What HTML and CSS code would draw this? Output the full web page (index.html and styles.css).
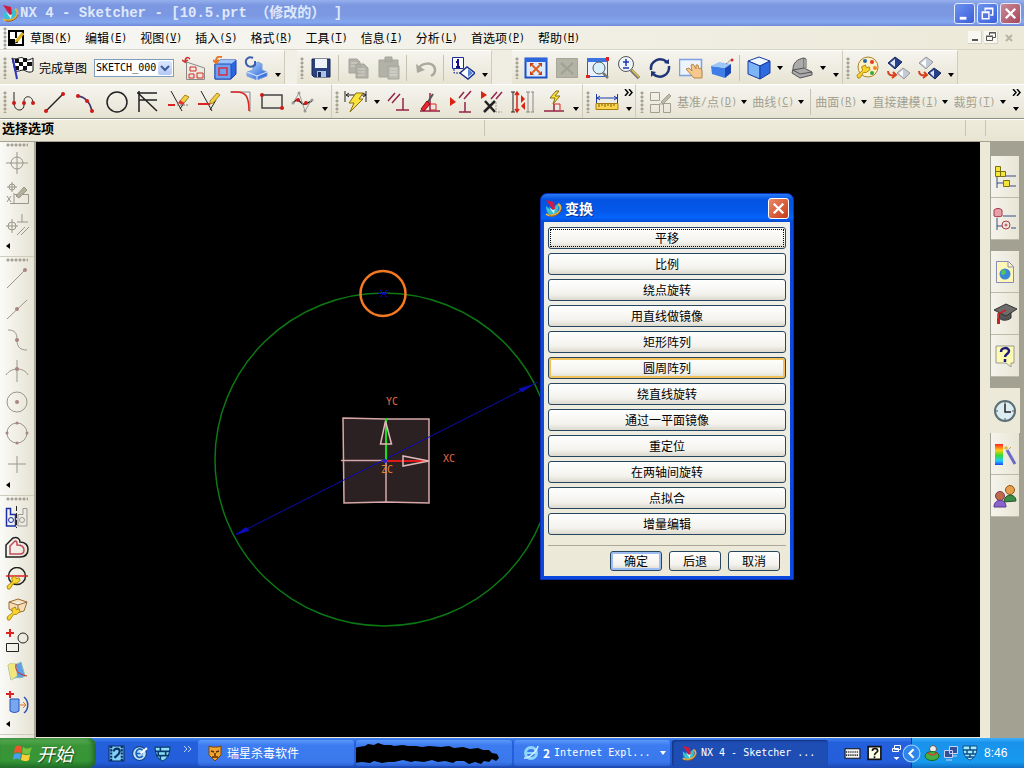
FILE: index.html
```html
<!DOCTYPE html>
<html lang="zh-CN">
<head>
<meta charset="utf-8">
<title>NX 4 - Sketcher</title>
<link rel="stylesheet" href="styles.css">
</head>
<body>
<svg class="defs" aria-hidden="true">
  <defs>
    <linearGradient id="gBlue" x1="0" y1="0" x2="1" y2="1"><stop offset="0" stop-color="#b9dcff"/><stop offset="1" stop-color="#1c55d8"/></linearGradient>
    <linearGradient id="gRainbow" x1="0" y1="0" x2="0" y2="1"><stop offset="0" stop-color="#f22"/><stop offset=".3" stop-color="#fc1"/><stop offset=".55" stop-color="#3d3"/><stop offset=".8" stop-color="#2cf"/><stop offset="1" stop-color="#24e"/></linearGradient>
  </defs>
  <symbol id="nx" viewBox="0 0 18 18"><path d="M2 7c2 2 5 4 7 4 1-2 2-5 5-6 2 5-1 11-6 11-4 0-6-4-6-9z" fill="#35c3d2" stroke="none"/><path d="M5 8l4 3 2-3-1 7z" fill="#d9f6f8" stroke="none"/><path d="M2 1l8 2 1 7-2 1z" fill="#d31a3c" stroke="none"/><path d="M2 15c4 3 12 1 14-4 1-3 0-5-2-6" stroke="#e8b03a" stroke-width="2"/><path d="M5 17c5 1 10-1 12-6" stroke="#9a5a1e"/></symbol>
  <symbol id="down" viewBox="0 0 6 4"><path d="M0 0h6L3 4z" fill="#000" stroke="none"/></symbol>
  <symbol id="left" viewBox="0 0 4 6"><path d="M4 0v6L0 3z" fill="#000" stroke="none"/></symbol>
  <symbol id="more" viewBox="0 0 9 7"><path d="M1 0l3 3.500-3 3.500M5 0l3 3.500-3 3.500" stroke="#000" stroke-width="1.500"/></symbol>
  <symbol id="wrench" viewBox="0 0 16 16"><path d="M2 15l-1-3 6-5-1-4 4-2 1 3 3-1 1 3-4 3-3 0-4 6z" fill="#f6d52c" stroke="#b18114"/></symbol>
</svg>

<header class="titlebar">
  <svg class="logo"><use href="#nx"/></svg>
  <h1>NX 4 - Sketcher - [10.5.prt （修改的） ]</h1>
  <div class="winbtns">
    <button aria-label="最小化"><svg viewBox="0 0 20 20"><path d="M5 15h7" stroke="#fff" stroke-width="3"/></svg></button>
    <button aria-label="还原"><svg viewBox="0 0 20 20" stroke="#fff"><path d="M7.500 7V4.500h8v7H13M7 5h9" stroke-width="1.500"/><path d="M4.500 8.500h7v7h-7zM4 9h8" stroke-width="1.500"/></svg></button>
    <button class="close" aria-label="关闭"><svg viewBox="0 0 20 20"><path d="M5 5l10 10M15 5L5 15" stroke="#fff" stroke-width="2.500"/></svg></button>
  </div>
</header>

<nav class="menubar">
  <i class="grip"></i>
  <svg class="doc" viewBox="0 0 16 16"><path d="M1 1h14v14H1z" fill="#fff" stroke="#000" stroke-width="2"/><path d="M1 9h6v6H1zM7 2h2v6H7z" fill="#000" stroke="none"/><path d="M8 12l7-9" stroke="#d9b21e" stroke-width="3"/><path d="M7 13l3-1" stroke="#000"/></svg>
  <button>草图<span>(<u>K</u>)</span></button>
  <button>编辑<span>(<u>E</u>)</span></button>
  <button>视图<span>(<u>V</u>)</span></button>
  <button>插入<span>(<u>S</u>)</span></button>
  <button>格式<span>(<u>R</u>)</span></button>
  <button>工具<span>(<u>T</u>)</span></button>
  <button>信息<span>(<u>I</u>)</span></button>
  <button>分析<span>(<u>L</u>)</span></button>
  <button>首选项<span>(<u>P</u>)</span></button>
  <button>帮助<span>(<u>H</u>)</span></button>
  <div class="mdi">
    <button aria-label="最小化窗口"><svg viewBox="0 0 14 14"><path d="M4 10h6" stroke="#555" stroke-width="2"/></svg></button>
    <button aria-label="还原窗口"><svg viewBox="0 0 14 14" stroke="#555"><path d="M5.500 5V2.500h6v5H9M5 3h7M2.500 6.500h6v4h-6zM2 6h7" /></svg></button>
    <button class="off" aria-label="关闭窗口" disabled><svg viewBox="0 0 14 14"><path d="M4 4l6 6M10 4l-6 6" stroke="#b8b5a6" stroke-width="2"/></svg></button>
  </div>
</nav>

<div class="toolrow">
  <div class="toolbar">
    <i class="grip"></i>
    <button class="finish"><svg viewBox="0 0 24 24"><path d="M1 2c4 3 8-2 11 0s5 3 10 0v13c-4 3-8-1-10-1s-5 2-8 1z" fill="#fff" stroke="#111"/><path d="M4 3h4v4H4zM12 2h4v4h-4zM8 6h4v4H8zM16 6h5v4h-5zM4 10h4v4H4zM12 10h4v4h-4z" fill="#111" stroke="none"/><path d="M2 3l4 20" stroke="#2c36c0" stroke-width="2"/></svg>完成草图</button>
    <label class="combo"><select aria-label="草图名称"><option>SKETCH_000</option></select><span><svg viewBox="0 0 14 14"><path d="M3 5l4 4 4-4" stroke="#3c5a96" stroke-width="2"/></svg></span></label>
    <button class="tool" aria-label="定向视图"><svg viewBox="0 0 24 24"><path d="M4.500 23.500V6l18 6v11.500zM4 3v4" stroke="#888"/><path d="M8 11h6v4H8zM7 18h5v4H7zM15 17h6v5h-6z" stroke="#d62a2a"/><path d="M8 3C5 0 3 2 3 6l-3-2M3 6l3-2" stroke="#d62a2a" stroke-width="1.500"/></svg></button>
    <button class="tool" aria-label="定向到模型"><svg viewBox="0 0 24 24"><path d="M2 8l5-4h16v14l-5 5H2z" fill="#2c66e0" stroke="#1b3fae"/><path d="M2 8l5-4h16l-5 4z" fill="#9cc5f7" stroke="none"/><path d="M2 8h16v15H2z" fill="#6ca2f0" stroke="#234bb8"/><path d="M6 12h8v7H6z" stroke="#e02a3a" stroke-width="1.500"/><path d="M9 1C5 0 3 1 3 6M0 4l3 3 3-3" stroke="#e8752a" stroke-width="2"/></svg></button>
    <button class="tool" aria-label="重新附着"><svg viewBox="0 0 24 24"><path d="M3 16l6-2V9l5-3 4 2v6l5 2v4l-10 4-10-4z" fill="url(#gBlue)" stroke="#7b9fdc"/><path d="M3 16l10 4 10-4M13 20v4" stroke="#dcebff"/><path d="M9 2C5 0 1 3 2 7s6 5 9 2V5" stroke="#3d5fb0" stroke-width="2"/></svg></button>
    <button class="drop low" aria-label="更多"><svg><use href="#down"/></svg></button>
  </div>
  <div class="toolbar gap-s">
    <i class="grip"></i>
    <button class="tool" aria-label="保存"><svg viewBox="0 0 24 24"><path d="M3 3h18v18H5l-2-2z" fill="#29417e" stroke="#1a2750"/><path d="M6 3h12v9H6z" fill="#eef2fa" stroke="none"/><path d="M8 15h9v6H8z" fill="#a9c4e8" stroke="none"/><path d="M9 16h3v5H9z" fill="#1a2750" stroke="none"/></svg></button>
    <i class="sep"></i>
    <button class="tool" aria-label="复制" disabled><svg viewBox="0 0 24 24" fill="#b2b2a8" stroke="#a4a49a"><path d="M3 3h8l3 3v11H3zM10 8h8l4 4v10H10z"/><path d="M5 7h6M5 10h4M12 13h7M12 16h7M12 19h7" stroke="#d9d8cd"/></svg></button>
    <button class="tool" aria-label="粘贴" disabled><svg viewBox="0 0 24 24" fill="#b2b2a8" stroke="#a4a49a"><path d="M2 4h19v17H2zM8 1h7v5H8z"/><path d="M11 10h11v13H11z" fill="#bdbdb4"/><path d="M13 13h7M13 16h7M13 19h7" stroke="#dddcd2"/></svg></button>
    <i class="sep"></i>
    <button class="tool" aria-label="撤消" disabled><svg viewBox="0 0 24 24"><path d="M4 14c2-8 17-9 17 0 0 3-2 5-4 6" stroke="#aaa99e" stroke-width="2.500"/><path d="M2 8l1 9 8-3z" fill="#aaa99e" stroke="none"/></svg></button>
    <i class="sep"></i>
    <button class="tool" aria-label="对象信息"><svg viewBox="0 0 24 24"><path d="M1.500 1.500h11v11h-11z" fill="#fff" stroke="#1b2a9a"/><path d="M7 3v2M5 6h2v5M5 11h4" stroke="#10108a" stroke-width="2"/><path d="M3 13v4h6" stroke="#1b2a9a" stroke-dasharray="2 1"/><path d="M9 17l7-6 8 6-7 6z" fill="#fff" stroke="#18308a" stroke-width="1.500"/><path d="M17 13v8l5-4z" fill="#5684d8" stroke="none"/></svg></button>
    <button class="drop low" aria-label="更多"><svg><use href="#down"/></svg></button>
  </div>
  <div class="toolbar gap-l">
    <i class="grip"></i>
    <button class="tool" aria-label="适合窗口"><svg viewBox="0 0 24 24"><path d="M1.500 2.500h21v19h-21z" fill="#dcebfd" stroke="#1b50c8" stroke-width="2"/><path d="M1 2h22v4H1z" fill="#2b66dc" stroke="none"/><path d="M8 9l8 8M16 9l-8 8" stroke="#e0621c" stroke-width="2"/><path d="M6 7h4l-4 4zM18 7v4l-4-4zM6 19v-4l4 4zM18 19h-4l4-4z" fill="#c23a10" stroke="none"/></svg></button>
    <button class="tool" aria-label="适合选择" disabled><svg viewBox="0 0 24 24"><path d="M1.500 2.500h21v19h-21z" fill="#b3b3a6" stroke="#a6a69a"/><path d="M6 7l12 11M18 7L6 18" stroke="#a0a094" stroke-width="2"/></svg></button>
    <button class="tool" aria-label="缩放窗口"><svg viewBox="0 0 24 24"><path d="M1.500 3.500h20v17h-20z" fill="#e8f1fd" stroke="#2a5cd0"/><path d="M1 2h21v4H1z" fill="#3a74e0" stroke="none"/><circle cx="13" cy="12" r="6" fill="#d8f0fa" stroke="#555"/><path d="M17 17l5 5" stroke="#777" stroke-width="2.500"/><path d="M0 19h4v3H0zM20 1h3v4h-3z" fill="#d22" stroke="none"/></svg></button>
    <button class="tool" aria-label="缩放"><svg viewBox="0 0 24 24"><circle cx="9" cy="8" r="7.500" fill="#eef6fb" stroke="#555"/><path d="M9 3v7M6 6h6M6 12h6" stroke="#2038b0" stroke-width="1.500"/><path d="M14 14l8 8" stroke="#777" stroke-width="3.500"/><path d="M15 14l7 7" stroke="#e3c64a" stroke-width="1.500"/></svg></button>
    <button class="tool" aria-label="旋转"><svg viewBox="0 0 24 24" stroke="#1f3578" stroke-width="2.500"><path d="M3 14C2 5 12 0 19 6M21 10c1 9-9 14-16 8"/><path d="M16 7l5 1V3zM8 16l-5-1v6z" fill="#1f3578" stroke="none"/></svg></button>
    <button class="tool" aria-label="平移"><svg viewBox="0 0 24 24"><path d="M.500 3.500h22v16h-22z" fill="#eef4fd" stroke="#7ba0e4" stroke-width="1.500"/><path d="M7 13l3-1 3 3-1-6 2-1 3 5v-4l2 0 1 4 2-1 1 3v7h-8z" fill="#f6c88d" stroke="#b98745"/></svg></button>
    <button class="tool" aria-label="透视"><svg viewBox="0 0 24 24"><path d="M1 10l14 2v10L2 18z" fill="#3e7ee6" stroke="none"/><path d="M1 10l8-4 12 2-6 4z" fill="#9cc8f8" stroke="none"/><path d="M15 12l6-4v9l-6 5z" fill="#1b48b4" stroke="none"/><path d="M16 8l6-5" stroke="#777" stroke-dasharray="2 1"/><circle cx="22" cy="4" r="1.500" fill="#d22" stroke="none"/></svg></button>
    <i class="sep"></i>
    <button class="tool" aria-label="着色"><svg viewBox="0 0 24 24" stroke="#1b3aa0"><path d="M1 5l11-4 11 4-10 5z" fill="#eef6ff"/><path d="M1 5l12 5v13L1 18z" fill="#7db4f6"/><path d="M13 10l10-5v12l-10 6z" fill="#2e6be0"/></svg></button>
    <button class="drop" aria-label="着色选项"><svg><use href="#down"/></svg></button>
    <button class="tool" aria-label="定向"><svg viewBox="0 0 24 24" stroke="#555"><path d="M3 13C3 7 7 3 14 2v10l8 4v3l-12 3-8-5z" fill="#aaa"/><path d="M3 14l11-2M10 18l12-2M10 18l-7-4M14 2l2 1v9" /></svg></button>
    <button class="drop" aria-label="定向选项"><svg><use href="#down"/></svg></button>
    <button class="drop low" aria-label="更多"><svg><use href="#down"/></svg></button>
  </div>
  <div class="toolbar">
    <i class="grip"></i>
    <button class="tool" aria-label="编辑对象显示"><svg viewBox="0 0 24 24"><ellipse cx="13" cy="11" rx="10" ry="10" fill="#fbf0c8" stroke="#a9832e"/><circle cx="10" cy="5" r="2" fill="#26a" stroke="none"/><circle cx="17" cy="6" r="2" fill="#e33" stroke="none"/><circle cx="20" cy="12" r="2" fill="#e82" stroke="none"/><circle cx="17" cy="17" r="2" fill="#3a3" stroke="none"/><use href="#wrench" x="1" y="8" width="15" height="15"/></svg></button>
    <button class="tool" aria-label="隐藏"><svg viewBox="0 0 24 24"><path d="M2 7l7-6 7 5-7 7z" fill="#274189" stroke="#1b2a60"/><path d="M9 3v8l-5-4z" fill="#dfe8f8" stroke="none"/><path d="M11 17l6-5 7 5-6 6z" fill="#c4cbd8" stroke="#999"/><path d="M17 14v7l-4-4z" fill="#fff" stroke="none"/><path d="M2 15c0 4 3 5 7 4M7 16l3 3-4 3" stroke="#d8431e" stroke-width="2"/></svg></button>
    <button class="tool" aria-label="显示"><svg viewBox="0 0 24 24"><path d="M2 7l7-6 7 5-7 7z" fill="#c4cbd8" stroke="#999"/><path d="M9 3v8l-5-4z" fill="#fff" stroke="none"/><path d="M11 17l6-5 7 5-6 6z" fill="#274189" stroke="#1b2a60"/><path d="M17 14v7l-4-4z" fill="#dfe8f8" stroke="none"/><path d="M2 15c0 4 3 5 7 4M7 16l3 3-4 3" stroke="#d8431e" stroke-width="2"/></svg></button>
    <button class="drop low" aria-label="更多"><svg><use href="#down"/></svg></button>
  </div>
</div>

<div class="toolrow second">
  <div class="toolbar">
    <i class="grip"></i>
    <button class="tool" aria-label="轮廓"><svg viewBox="0 0 24 24"><path d="M2 2v11c0 9 10 9 10 2V11c0-6 9-6 9 2" /><g class="dots"><circle cx="2" cy="13" r="2"/><circle cx="12" cy="13" r="2"/><circle cx="21" cy="13" r="2"/></g></svg></button>
    <button class="tool" aria-label="直线"><svg viewBox="0 0 24 24"><path d="M3 21L20 4" stroke-width="1.500"/><g class="dots"><circle cx="3" cy="21" r="2"/><circle cx="20" cy="4" r="2"/></g></svg></button>
    <button class="tool" aria-label="圆弧"><svg viewBox="0 0 24 24"><path d="M4 6c7 1 12 6 14 15" stroke="#436" stroke-width="1.500"/><g class="dots"><circle cx="4" cy="6" r="2"/><circle cx="13" cy="11" r="2"/><circle cx="18" cy="21" r="2"/></g></svg></button>
    <button class="tool" aria-label="圆"><svg viewBox="0 0 24 24"><circle cx="12" cy="12" r="10" stroke-width="1.500"/></svg></button>
    <button class="tool" aria-label="派生直线"><svg viewBox="0 0 24 24"><path d="M3 1v21M1 3h20M3 10h18M2 3l19 18" stroke-width="1.500"/></svg></button>
    <button class="tool" aria-label="快速修剪"><svg viewBox="0 0 24 24"><path d="M4 1l11 20M19 10l-6 9"/><path d="M1 15h7" stroke="#d22" stroke-width="2"/><path d="M10 15h12" stroke-dasharray="2 1" stroke="#777"/><path d="M13 11l5-6 4 2-5 6z" fill="#f1cf49" stroke="#a98319"/><path d="M13 10l4 3-2 2-4-2z" fill="#e33" stroke="none"/></svg></button>
    <button class="tool" aria-label="快速延伸"><svg viewBox="0 0 24 24"><path d="M3 1l11 20M18 10l-6 10"/><path d="M0 14h12" stroke="#d22" stroke-width="2"/><path d="M12 11l7-8 3 2-7 8-3 1z" fill="#f1cf49" stroke="#a98319"/></svg></button>
    <button class="tool" aria-label="圆角"><svg viewBox="0 0 24 24"><path d="M1 2h20v20" stroke="#888"/><path d="M2 2h6c9 0 12 5 12 19" stroke="#d22" stroke-width="1.500"/></svg></button>
    <button class="tool" aria-label="矩形"><svg viewBox="0 0 24 24"><path d="M2 5h20v13H2z" stroke="#444" stroke-width="1.500"/><g class="dots"><circle cx="2" cy="5" r="2"/><circle cx="22" cy="18" r="2"/></g></svg></button>
    <button class="tool" aria-label="样条"><svg viewBox="0 0 24 24"><path d="M2 13c5-7 7 0 10 1s5-2 9-3" stroke-width="1.500"/><path d="M2 13L8 3l6 18 7-12" stroke="#999"/><g class="dots"><circle cx="7" cy="10" r="2"/><circle cx="15" cy="13" r="2"/></g><g fill="#999" stroke="none"><circle cx="2" cy="13" r="1.500"/><circle cx="8" cy="3" r="1.500"/><circle cx="14" cy="21" r="1.500"/><circle cx="21" cy="10" r="1.500"/></g></svg></button>
    <button class="drop low" aria-label="更多"><svg><use href="#down"/></svg></button>
  </div>
  <div class="toolbar">
    <i class="grip"></i>
    <button class="tool" aria-label="自动判断的尺寸"><svg viewBox="0 0 24 24"><path d="M1 1v11M22 1v11M2 5h20M5 3L2 5l3 2M19 3l3 2-3 2"/><path d="M12 3h7l-4 6h4L6 22l4-9H5z" fill="#fbe23c" stroke="#8a6f10"/></svg></button>
    <button class="drop" aria-label="尺寸选项"><svg><use href="#down"/></svg></button>
    <button class="tool" aria-label="约束"><svg viewBox="0 0 24 24" stroke="#93254a" stroke-width="1.500"><path d="M1 11l7-8M5 13l8-9M16 8v12M9 20h13"/></svg></button>
    <button class="tool" aria-label="自动约束"><svg viewBox="0 0 24 24"><path d="M12 3v18M2 21h20" stroke="#93254a" stroke-width="1.500"/><path d="M12 14h6v6h-6" stroke="#d22"/><path d="M10 12l5-8" stroke="#555" stroke-width="2"/><path d="M3 19l6-8 3 3-6 7z" fill="#e23" stroke="#811"/></svg></button>
    <button class="tool" aria-label="显示约束"><svg viewBox="0 0 24 24" stroke="#93254a" stroke-width="1.500"><path d="M10 8l5-6M15 9l7-8M16 12v10M10 22h12"/><path d="M1 7l6 5-6 4z" fill="#d21" stroke="none"/></svg></button>
    <button class="tool" aria-label="不显示约束"><svg viewBox="0 0 24 24"><path d="M11 9l6-7M16 9l6-7" stroke="#93254a" stroke-width="1.500"/><path d="M1 1l6 4-6 4z" fill="#d21" stroke="none"/><path d="M5 11l10 11M15 11L4 22" stroke-width="2.500"/><path d="M16 12v10h6" stroke="#999" stroke-dasharray="2 1"/></svg></button>
    <button class="tool" aria-label="转换参考"><svg viewBox="0 0 24 24"><path d="M2 2v20M0 2h4M0 22h4" stroke="#222"/><path d="M6 2v20M4 5l2-3 2 3M4 19l2 3 2-3" stroke="#d21" stroke-width="1.500"/><path d="M10 5l4 4-4 4zM14 12l-4 4 4 4z" fill="#d21" stroke="none"/><path d="M17 2v20M22 2v20M15 2h4M15 22h4M20 2h3M20 22h3" stroke="#888"/></svg></button>
    <button class="tool" aria-label="备选解"><svg viewBox="0 0 24 24"><path d="M12 14v7M2 21h20" stroke="#93254a" stroke-width="1.500"/><path d="M12 14h6v6" stroke="#d22"/><path d="M14 1l-6 7h5l-2 6 7-8h-5l4-5z" fill="#fbe23c" stroke="#8a6f10"/></svg></button>
    <button class="drop low" aria-label="更多"><svg><use href="#down"/></svg></button>
  </div>
  <div class="toolbar">
    <i class="grip"></i>
    <button class="tool" aria-label="测量距离"><svg viewBox="0 0 24 24"><path d="M1.500 4v9M22.500 4v9M2 8h20M5 6L2 8l3 2M19 6l3 2-3 2" stroke="#1b3aa8"/><path d="M1 13.500h22v6H1z" fill="#fbd64c" stroke="#a87a14"/><path d="M4 14v3M7 14v2M10 14v3M13 14v2M16 14v3M19 14v2" stroke="#7a5a0e"/></svg></button>
    <button class="overflow" aria-label="更多"><svg class="more"><use href="#more"/></svg><svg><use href="#down"/></svg></button>
  </div>
  <div class="toolbar grow">
    <i class="grip"></i>
    <button class="tool" aria-label="草图特征" disabled><svg viewBox="0 0 24 24" stroke="#a09f90"><path d="M1.500 2.500h9v8h-9zM1.500 14.500h9v8h-9zM14.500 13.500h7v9h-7zM10 14h4"/><path d="M12 12l8-8 2 2-8 8z" fill="#bdbba8"/></svg></button>
    <button class="text" disabled>基准<span>/</span>点<span>(<u>D</u>)</span></button><button class="drop" aria-label="基准选项"><svg><use href="#down"/></svg></button>
    <button class="text" disabled>曲线<span>(<u>C</u>)</span></button><button class="drop" aria-label="曲线选项"><svg><use href="#down"/></svg></button>
    <i class="sep"></i>
    <button class="text" disabled>曲面<span>(<u>R</u>)</span></button><button class="drop" aria-label="曲面选项"><svg><use href="#down"/></svg></button>
    <button class="text" disabled>直接建模<span>(<u>I</u>)</span></button><button class="drop" aria-label="直接建模选项"><svg><use href="#down"/></svg></button>
    <button class="text" disabled>裁剪<span>(<u>T</u>)</span></button><button class="drop" aria-label="裁剪选项"><svg><use href="#down"/></svg></button>
    <button class="overflow end" aria-label="更多"><svg class="more"><use href="#more"/></svg><svg><use href="#down"/></svg></button>
  </div>
</div>

<div class="prompt"><strong>选择选项</strong><span></span><i></i><i></i></div>

<main class="work">
  <aside class="palette">
    <div class="group muted">
      <i class="hgrip"></i>
      <button aria-label="点捕捉"><svg viewBox="0 0 24 24"><circle cx="12" cy="12" r="6"/><path d="M12 1v22M1 12h22"/></svg></button>
      <button aria-label="编辑捕捉"><svg viewBox="0 0 24 24"><circle cx="7" cy="5" r="3"/><path d="M7 0v10M2 5h10M2 14l4 6M6 14l-4 6M9 11v11M9.500 12.500h14v9H5"/><path d="M11 14l8-9 3 3-8 8z" fill="#b3b19c"/></svg></button>
      <button aria-label="捕捉约束"><svg viewBox="0 0 24 24"><circle cx="7" cy="13" r="4"/><path d="M7 6v14M1 13h12M17 1v8M12 9h11M12 22l8-8M16 22l8-8"/></svg></button>
      <button class="side" aria-label="更多"><svg><use href="#left"/></svg></button>
    </div>
    <div class="group muted">
      <i class="hgrip"></i>
      <button aria-label="端点"><svg viewBox="0 0 24 24"><path d="M2 22L20 4"/><circle class="rose" cx="20" cy="4" r="2"/></svg></button>
      <button aria-label="中点"><svg viewBox="0 0 24 24"><path d="M2 22L22 3"/><circle class="rose" cx="12" cy="12" r="2"/></svg></button>
      <button aria-label="控制点"><svg viewBox="0 0 24 24"><path d="M3 2c7 0 9 3 9 10s3 10 10 10"/><circle class="rose" cx="12" cy="12" r="2"/></svg></button>
      <button aria-label="交点"><svg viewBox="0 0 24 24"><path d="M12 1v22M1 16C6 8 19 8 23 16"/><circle class="rose" cx="12" cy="10" r="2"/></svg></button>
      <button aria-label="圆心"><svg viewBox="0 0 24 24"><circle cx="12" cy="12" r="10"/><circle class="rose" cx="12" cy="12" r="2"/></svg></button>
      <button aria-label="象限点"><svg viewBox="0 0 24 24"><circle cx="12" cy="12" r="10"/><g class="rose"><circle cx="12" cy="2" r="1.500"/><circle cx="2" cy="12" r="1.500"/><circle cx="22" cy="12" r="1.500"/><circle cx="12" cy="22" r="1.500"/></g></svg></button>
      <button aria-label="现有点"><svg viewBox="0 0 24 24"><path d="M12 4v17M3 12h18"/></svg></button>
      <button class="side" aria-label="更多"><svg><use href="#left"/></svg></button>
    </div>
    <div class="group">
      <i class="hgrip"></i>
      <button aria-label="镜像"><svg viewBox="0 0 24 24"><path d="M1.500 3.500h4v6h5V21h-9z" stroke="#1c2fa8" stroke-width="1.500"/><circle cx="6" cy="15" r="2.500" stroke="#1c2fa8"/><path d="M22 3.500h-4v6h-5V21h9z" stroke="#999"/><circle cx="17" cy="15" r="2.500" stroke="#999"/><path d="M11.500 1v22" stroke-dasharray="5 2"/></svg></button>
      <button aria-label="偏置曲线"><svg viewBox="0 0 24 24"><path d="M1 21V9L8 2c5-2 7 2 7 4 6 0 8 4 8 7 0 5-3 8-8 8z" stroke-width="1.500"/><path d="M5 18v-8l5-5c2 0 2 1 2 4 5 0 7 2 7 5 0 2-1 4-4 4z" stroke="#c34a5a" stroke-width="1.500"/></svg></button>
      <button aria-label="编辑曲线"><svg viewBox="0 0 24 24"><circle cx="12" cy="9" r="8.500" stroke-width="1.500"/><path d="M1 9h22" stroke="#d22" stroke-width="1.500"/><use href="#wrench" x="1" y="8" width="15" height="15"/></svg></button>
      <button aria-label="编辑定义"><svg viewBox="0 0 24 24"><path d="M4 4l9-3 9 3-3 9-8 2-7-4zM4 4l9 3 9-3M13 7v7" fill="#f6ddb4" stroke="#9a6d3a"/><use href="#wrench" x="1" y="8" width="15" height="15"/></svg></button>
      <button aria-label="添加对象"><svg viewBox="0 0 24 24"><path d="M5 0v8M1 4h8" stroke="#d22" stroke-width="2"/><path d="M1.500 14.500h12v8h-12z"/><circle cx="18" cy="9" r="5"/></svg></button>
      <button aria-label="相交曲线"><svg viewBox="0 0 24 24"><path d="M3 5c6-4 6 2 13-3l4 14c-6 4-7-1-14 4z" fill="#5ba0ea" stroke="#8ba"/><path d="M3 5c4-3 6-1 8-1l1 12-6 4z" fill="#f3e67c" stroke="none"/><path d="M11 4c-1 6 1 10 11 12" stroke="#d22"/></svg></button>
      <button aria-label="投影曲线"><svg viewBox="0 0 24 24"><path d="M5 0v7M1 3h8" stroke="#d22" stroke-width="2"/><path d="M5 8h9v12c-3 2-6 2-9 0z" fill="#77a8ef" stroke="#2850b8"/><path d="M14 14h7M18 11l3 3-3 3" stroke="#e0742a"/><path d="M19 6c5 4 5 12 0 16" stroke="#2850b8" stroke-width="1.500"/></svg></button>
      <button class="side" aria-label="更多"><svg><use href="#left"/></svg></button>
    </div>
  </aside>

  <section class="viewport">
    <svg class="sketch">
      <g transform="translate(-36 -142)">
        <ellipse cx="384" cy="459.500" rx="169" ry="166.500" stroke="#0c7814" stroke-width="1.500"/>
        <path d="M343 418l42 1 44 0v84l-43-1-42 1z" fill="#2b2123" stroke="#d8a8a8" stroke-width="1.500"/>
        <path d="M341 460.500h46M386 461v42" stroke="#d8a8a8" stroke-width="1.500"/>
        <path d="M236 534.500L538 382" stroke="#0c0cb4"/>
        <path d="M236 534.500l10-7 3 3zM532 385l-10 7-3-3z" fill="#0c0cb4" stroke="#0c0cb4"/>
        <circle cx="383" cy="293.500" r="22.500" stroke="#f47920" stroke-width="2.500"/>
        <path d="M380 290l7 7M387 290l-7 7M378 293.500h10" stroke="#0c0cb4"/>
        <path d="M386 460V418" stroke="#18e018" stroke-width="2"/>
        <path d="M386 461h42" stroke="#e01818" stroke-width="2"/>
        <path d="M385.500 421l-5 23h11z" stroke="#e0b8b8" stroke-width="1.500"/>
        <path d="M429 461l-26-5v10z" stroke="#e0b8b8" stroke-width="1.500"/>
        <circle cx="385" cy="461" r="2" fill="#2222dd" stroke="none"/>
        <text x="386" y="405">YC</text><text x="443" y="462">XC</text><text class="z" x="381" y="473">ZC</text>
      </g>
    </svg>
    <div class="dialog" role="dialog" aria-labelledby="dlg">
      <header><svg class="logo"><use href="#nx"/></svg><h2 id="dlg">变换</h2>
        <button class="close" aria-label="关闭对话框"><svg viewBox="0 0 20 20"><path d="M5 5l10 10M15 5L5 15" stroke="#fff" stroke-width="2.500"/></svg></button></header>
      <div class="body">
        <div class="options">
          <button class="focus">平移</button><button>比例</button><button>绕点旋转</button><button>用直线做镜像</button><button>矩形阵列</button><button class="hot">圆周阵列</button><button>绕直线旋转</button><button>通过一平面镜像</button><button>重定位</button><button>在两轴间旋转</button><button>点拟合</button><button>增量编辑</button>
        </div>
        <footer><button class="default">确定</button><button>后退</button><button>取消</button></footer>
      </div>
    </div>
  </section>

  <aside class="resources">
    <div class="tabs">
      <button aria-label="装配导航器"><svg viewBox="0 0 24 24"><path d="M4 12v11M4 18h6M12 11h11M17 21h6" stroke="#3c4a8c"/><path d="M2.500 1.500h5v5h-5zM2.500 6.500h5v5h-5zM7.500 6.500h5v5h-5zM10.500 15.500h6v6h-6z" fill="#f4e636" stroke="#7a7210"/></svg></button>
      <button aria-label="部件导航器"><svg viewBox="0 0 24 24"><path d="M4 11v12M4 19h5M10 9h13M18 21h5" stroke="#3c4a8c"/><path d="M1 3c2-2 6-2 8 0v6c-2 1-6 1-8 0z" fill="#e5a0a8" stroke="#a33a4a"/><circle cx="13" cy="18" r="4" stroke="#b23a4a"/><circle cx="13" cy="18" r="1" stroke="#b23a4a"/></svg></button>
    </div>
    <div class="tabs">
      <button aria-label="浏览器"><svg viewBox="0 0 24 24"><path d="M3.500 1.500h12l5 5v16h-17z" fill="#fdf7b8" stroke="#8a8ab8"/><path d="M15 2v5h5" stroke="#8a8ab8"/><circle cx="12" cy="14" r="5.500" fill="#3a86d8" stroke="none"/><path d="M9 10c3-2 5 2 3 4s-4 1-4-1z" fill="#5bc25b" stroke="none"/></svg></button>
      <button aria-label="培训"><svg viewBox="0 0 24 24"><path d="M6 10v6c3 3 8 3 12 0v-6z" fill="#555" stroke="#333"/><path d="M1 8l12-6 11 5-11 7z" fill="#6d6d6d" stroke="#333"/><path d="M13 8l-8 4v9" stroke="#c22" stroke-width="1.500"/><path d="M4 16h3v6H4z" fill="#c22" stroke="none"/></svg></button>
      <button aria-label="帮助"><svg viewBox="0 0 24 24"><path d="M3 2h18v17h-3v4l-5-4H3z" fill="#fdfbb0" stroke="#999"/><path d="M8 8c0-5 8-5 8-1 0 3-4 3-4 6M12 15v3" stroke="#1b1b7a" stroke-width="2.500"/></svg></button>
    </div>
    <div class="tabs">
      <button class="active" aria-label="历史"><svg viewBox="0 0 24 24"><circle cx="12" cy="12" r="10" fill="#dcedf2" stroke="#5d7078" stroke-width="2"/><path d="M12 5v8h6" stroke="#222" stroke-width="1.500"/><path d="M12 3v2M12 19v2M3 12h2M19 12h2" stroke="#555"/></svg></button>
      <button aria-label="材料"><svg viewBox="0 0 24 24"><path d="M2 2h8v21H2z" fill="url(#gRainbow)" stroke="none"/><path d="M14 8l8 14" stroke="#6c69c8" stroke-width="3"/><path d="M13 4v4M11 6h4M18 5l-2 2" stroke="#d9a520"/></svg></button>
      <button aria-label="角色"><svg viewBox="0 0 24 24"><circle cx="17" cy="6" r="4.500" fill="#e6a04a" stroke="#8b5a1e"/><path d="M11 18c0-9 12-9 12-1z" fill="#3b8a45" stroke="#23582a"/><circle cx="7" cy="12" r="4.500" fill="#c06a4a" stroke="#7b3a5a"/><path d="M1 23c0-9 12-9 12 0z" fill="#8a63cf" stroke="#553a8a"/></svg></button>
    </div>
  </aside>
</main>

<footer class="taskbar">
  <button class="start"><svg viewBox="0 0 20 20" stroke="none"><path d="M2 4c3-2 5-2 7 0L8 10c-2-1-4-1-7 0z" fill="#f0542a"/><path d="M10 4c3 2 5 2 9 0l-2 6c-3 2-5 1-8 0z" fill="#7ac33a"/><path d="M1 11c3-1 5-1 7 0l-1 6c-3-2-5-1-7 0z" fill="#4aa0f0"/><path d="M9 11c3 1 5 2 8 0l-1 6c-3 2-5 1-8 0z" fill="#f8cf35"/></svg>开始</button>
  <div class="quick">
    <button aria-label="视频"><svg viewBox="0 0 16 16"><path d="M1 1h14v14H1z" fill="#7fd0f4" stroke="#062b5c"/><path d="M3 1v14M13 1v14" stroke="#062b5c" stroke-width="2" stroke-dasharray="2 1"/><path d="M5 6c2-4 6-3 6 0s-3 4-5 6" stroke="#0b2f63" stroke-width="2"/></svg></button>
    <button aria-label="浏览器"><svg viewBox="0 0 16 16"><circle cx="8" cy="8" r="6.500" fill="#bfe0fa" stroke="#0b3f83"/><path d="M4 8h7M11 5c-3-3-7 0-6 4s5 3 6 1" stroke="#1560b8" stroke-width="1.500"/><path d="M9 8l6-5" stroke="#fff" stroke-width="2"/></svg></button>
    <button aria-label="防火墙"><svg viewBox="0 0 16 16"><path d="M1 2h14c0 7-2 11-7 13C3 13 1 9 1 2z" fill="#8ce0f4" stroke="#093a70"/><path d="M1 6h14M2 10h12M6 2v4M11 6v4M6 10v4M4 6v4" stroke="#093a70" stroke-width="1.500"/></svg></button>
    <button class="chev" aria-label="更多快捷方式"><svg viewBox="0 0 9 7"><path d="M1 0l3 3-3 3M5 0l3 3-3 3" stroke="#b8d4ff"/></svg></button>
  </div>
  <button class="task"><svg viewBox="0 0 16 16"><path d="M2 1l3 1h6l3-1v9l-6 6-6-6z" fill="#f0a52e" stroke="#7a4206"/><path d="M4 6l3 1M12 6L9 7M8 8v3M5 12h6" stroke="#5a2b02" stroke-width="1.500"/></svg>瑞星杀毒软件</button>
  <button class="task hidden" aria-label="窗口"><svg viewBox="0 0 146 22"><path d="M2 5l7-1 3-2 6 1 4-2 6 2 7 0 3 1 9-1 5 1 8 0 6 1 7-1 12 1 8-1 5 2 9-1 7 2 8-1 5 2 6 0 3 3 5 1 2 4-3 3-4-2-3 3-5-1-3 3-6-2-6 2-5-3-8 0-3 2-8-2-7 1-6-2-8 2-9-1-4 1-8-2-9 2-6 0-6 1-8-2-4 2-8-1-7 1-3-3-6 0 1-4-4-2 2-2z" fill="#000" stroke="none"/></svg></button>
  <button class="task"><svg viewBox="0 0 16 16"><circle cx="8" cy="8" r="5.500" stroke="#8fd4fb" stroke-width="3"/><path d="M3 8h10" stroke="#8fd4fb" stroke-width="2"/><path d="M1 13C6 14 14 6 15 1" stroke="#d2efff" stroke-width="1.500"/></svg><b>2</b><span>Internet Expl...</span><svg class="tri" viewBox="0 0 6 4"><path d="M0 0h6L3 4z" fill="#fff" stroke="none"/></svg></button>
  <button class="task current"><svg><use href="#nx"/></svg><span>NX 4 - Sketcher ...</span></button>
  <div class="lang">
    <button aria-label="键盘"><svg viewBox="0 0 16 16"><path d="M1 4h14v9H1z" fill="#f4f4f4" stroke="#111"/><path d="M2 7h12M2 10h12" stroke="#111" stroke-dasharray="1 1" stroke-width="1.500"/></svg></button>
    <button aria-label="输入法帮助"><svg viewBox="0 0 16 16"><path d="M2 2h12v12H2z" fill="#ffffe8" stroke="#111" stroke-width="1.500"/><path d="M6 6c0-3 5-3 5 0 0 1-3 2-3 4M8 11v2" stroke="#111" stroke-width="1.500"/></svg></button>
    <button aria-label="语言栏选项"><svg viewBox="0 0 16 20"><path d="M6 2.500h6v4H6zM4 5.500h6v3H4z" stroke="#fff"/><path d="M5 14h6l-3 3z" fill="#fff" stroke="none"/></svg></button>
  </div>
  <div class="tray">
    <button class="hide" aria-label="显示隐藏图标"><svg viewBox="0 0 18 18"><circle cx="9" cy="9" r="8" fill="#2f86ea" stroke="#a5d7ff"/><path d="M11 5L7 9l4 4" stroke="#fff" stroke-width="2"/></svg></button>
    <svg viewBox="0 0 16 16"><circle cx="9" cy="4" r="3.500" fill="#eee" stroke="#555"/><ellipse cx="8" cy="11" rx="7" ry="4.500" fill="#43b043" stroke="#176a1b"/><path d="M4 8c4 3 6 2 9 0" stroke="#e33" stroke-width="1.500"/></svg>
    <svg viewBox="0 0 16 16" fill="#344f9a" stroke="#c4d3f5"><path d="M6.500 1.500h8v7h-8zM1.500 5.500h8v7h-8zM3 15h6M10 11h4"/></svg>
    <svg viewBox="0 0 16 16"><path d="M1 1h14c0 8-2 12-7 14C3 13 1 9 1 1z" fill="#a8ecfb" stroke="#0b4c8a"/><path d="M1 5h14M2 9h12M4 12h8M8 1v4M5 5v4M11 5v4M8 9v4" stroke="#0b4c8a" stroke-width="1.500"/></svg>
    <time>8:46</time>
  </div>
</footer>
</body>
</html>
```
FILE: styles.css
```css
* { box-sizing: border-box; }
body {
  margin: 0;
  min-height: 100vh;
  display: flex;
  flex-direction: column;
  background: #ece9d8;
  color: #000;
  font: 12px/16px "Noto Sans CJK SC", sans-serif;
  overflow-x: hidden;
  fill: none;
  stroke: #222;
}
button, select { font: inherit; color: inherit; }
button {
  display: flex;
  align-items: center;
  justify-content: center;
  flex: none;
  padding: 0;
  margin: 0;
  border: 0;
  background: none;
  white-space: nowrap;
}
svg { display: block; flex: none; }
u { text-underline-offset: 1px; }
.defs { position: absolute; width: 0; height: 0; }
.logo { width: 18px; height: 18px; }
.dots { fill: #d01818; stroke: none; }

/* Title bar */
.titlebar {
  display: flex;
  align-items: center;
  height: 26px;
  padding: 0 3px 0 1px;
  background: linear-gradient(#95b0ee, #7b97e0 20%, #7c98e2 60%, #84a8f0 85%, #7088d8);
}
.titlebar h1 {
  flex: 1;
  margin: 0 0 0 1px;
  color: #dfe8fc;
  font: bold 14px/20px "Liberation Mono", "Noto Sans CJK SC", monospace;
  white-space: pre;
}
.winbtns { display: flex; gap: 2px; }
.winbtns button, .dialog .close {
  width: 21px;
  height: 21px;
  border: 1px solid #e4ebfc;
  border-radius: 3px;
  background: linear-gradient(135deg, #6d92f0, #3a5fd8);
}
.winbtns svg, .dialog .close svg { width: 19px; height: 19px; }
.winbtns .close { background: linear-gradient(135deg, #c88a98, #a8485a); }

/* Menu */
.menubar {
  display: flex;
  align-items: center;
  height: 24px;
  padding-left: 2px;
  background: linear-gradient(90deg, #f7f7f5, #ece9d8);
  border-bottom: 1px solid #d8d5c4;
}
.menubar > button { margin-right: 13px; }
.menubar span, .text span, .task span {
  font: 10px/16px "DejaVu Sans Mono", monospace;
}
.doc { width: 16px; height: 16px; margin-right: 6px; }
.mdi { display: flex; gap: 2px; margin: 0 6px 0 auto; }
.mdi button { width: 14px; height: 13px; background: #f8f7f1; border: 1px solid #d5d2c2; border-width: 0 1px 1px 0; }
.mdi .off { background: none; border: 0; width: 18px; }
.mdi svg { width: 14px; height: 14px; }
.grip {
  flex: none;
  width: 6px;
  height: 22px;
  background: radial-gradient(circle at 3px 2px, #a5a294 1px, transparent 2px) 0 0 / 6px 4px;
}

/* Toolbars */
.toolrow {
  display: flex;
  height: 34px;
  background: linear-gradient(90deg, #f3f2ec, #ece9d8);
}
.toolrow.second { border-bottom: 1px solid #8f8d80; height: 35px; }
.toolbar {
  display: flex;
  flex: none;
  align-items: center;
  padding-left: 2px;
  border-top: 1px solid #fff;
  border-right: 1px solid #cfccbc;
  background: linear-gradient(#f5f4ee, #edebdf 60%, #e6e3d2);
}
.toolbar.grow { flex: 1; border-right: 0; padding-left: 3px; }
.gap-s { margin-left: 12px; }
.gap-l { margin-left: 20px; }
.tool { width: 31px; height: 31px; }
.tool svg { width: 24px; height: 24px; }
.sep { flex: none; width: 1px; height: 26px; margin: 0 3px 0 2px; background: #c5c2b2; }
.finish { gap: 4px; padding: 0 7px 0 3px; }
.finish svg { width: 24px; height: 26px; }
.combo { position: relative; display: flex; width: 80px; height: 18px; margin-right: 4px; }
.combo select {
  appearance: none;
  width: 100%;
  padding: 0 0 0 1px;
  border: 1px solid #7f9db9;
  border-radius: 0;
  background: #fff;
  font: 10px/16px "DejaVu Sans Mono", monospace;
}
.combo span {
  position: absolute;
  right: 2px;
  top: 2px;
  width: 14px;
  height: 14px;
  border-radius: 2px;
  background: linear-gradient(#dde8fe, #b4c8f4);
  pointer-events: none;
}
.drop { width: 12px; height: 31px; }
.drop svg, .overflow svg { width: 6px; height: 4px; }
.drop.low { width: 13px; padding-top: 14px; }
.overflow { width: 13px; height: 31px; flex-direction: column; justify-content: space-between; padding: 3px 0 6px; }
.overflow .more { width: 9px; height: 7px; }
.overflow.end { margin: 0 2px 0 auto; }
.text { margin-left: 1px; color: #a3a090; }
.text + .drop { width: 14px; }

.prompt {
  display: flex;
  align-items: center;
  height: 23px;
  padding: 0 38px 5px 2px;
  border-top: 1px solid #fff;
  border-bottom: 1px solid #a5a294;
  font-size: 13px;
  background: linear-gradient(#eeebdc, #e8e5d3);
}
.prompt strong { width: 49%; }
.prompt span, .prompt i { height: 16px; border-left: 1px solid #c8c5b4; }
.prompt span { flex: 1; }
.prompt i { width: 20px; }
.prompt i:last-child { width: 1px; }

/* Work area */
.work { flex: 1; display: flex; min-height: 596px; }
.palette {
  flex: none;
  width: 36px;
  border-right: 2px solid #aaa899;
  background: linear-gradient(90deg, #fafaf7, #e6e3d3);
}
.group { display: flex; flex-direction: column; border-bottom: 1px solid #cfccbc; padding-bottom: 1px; }
.group button { width: 34px; height: 31px; }
.group button svg { width: 24px; height: 24px; }
.group .side { height: 15px; justify-content: flex-start; padding: 0 0 4px 6px; }
.group .side svg { width: 4px; height: 6px; }
.muted { stroke: #99978a; }
.rose { fill: #a88482; stroke: none; }
.hgrip { height: 5px; margin: 0 6px; background: radial-gradient(circle at 2px 3px, #a5a294 1px, transparent 2px) 0 0 / 4px 8px; }

.viewport { position: relative; flex: 1; background: #000; overflow: hidden; border-bottom: 1px solid #ece9d8; }
.sketch { position: absolute; width: 100%; height: 100%; }
.sketch text { font: 10px "DejaVu Sans Mono", monospace; fill: #e0694a; stroke: none; }
.sketch .z { fill: #f08020; }

/* Dialog window */
.dialog {
  position: absolute;
  left: 504px;
  top: 51px;
  width: 254px;
  padding: 0 3px 3px;
  border: 1px solid #0a2fb0;
  border-radius: 7px 7px 0 0;
  background: #0a48e0;
  stroke: #222;
}
.dialog header {
  display: flex;
  align-items: center;
  height: 28px;
  margin: 0 -3px;
  padding: 0 4px 0 3px;
  border-radius: 6px 6px 0 0;
  background: linear-gradient(#2a7af8, #0453e2 20%, #0458ea 60%, #0564fc 85%, #0448cc);
}
.dialog h2 { flex: 1; margin: 0 0 0 3px; color: #fff; font-size: 14px; line-height: 20px; text-shadow: 1px 1px #0a2f90; }
.dialog .close { background: linear-gradient(135deg, #ec8a68, #c83a18); border-color: #fff; }
.body { padding: 5px 4px; background: linear-gradient(#f0f0ea, #ece9d8); }
.options { display: flex; flex-direction: column; gap: 4px; }
.options button, .body footer button {
  height: 22px;
  border: 1px solid #27465f;
  border-radius: 3px;
  background: linear-gradient(#fff, #f3f2ed 70%, #dcd9cd);
}
.options .focus { outline: 1px dotted #000; outline-offset: -3px; }
.options .hot { box-shadow: inset 0 0 0 2px #f2c15a; }
.body footer {
  display: flex;
  justify-content: flex-end;
  gap: 7px;
  margin: 10px 0 0;
  padding: 5px 6px 0 0;
  border-top: 1px solid #aca899;
}
.body footer button { width: 52px; height: 20px; }
.body footer .default { box-shadow: inset 0 0 0 2px #9dbcf2; }

/* Resource tabs */
.resources {
  display: flex;
  flex-direction: column;
  gap: 11px;
  flex: none;
  width: 44px;
  padding: 14px 5px 0 10px;
  background: linear-gradient(90deg, #ece9d8 10px, #a3a191 10px);
}
.tabs button {
  width: 28px;
  height: 42px;
  margin-left: 1px;
  border-bottom: 1px solid #bdbaa9;
  background: linear-gradient(90deg, #f5f4ec, #e8e5d5);
}
.tabs button svg { width: 24px; height: 24px; }
.tabs .active { width: 30px; height: 45px; margin-left: 0; background: #ece9d8; border: 0; }

/* Taskbar */
.taskbar {
  display: flex;
  flex: none;
  height: 30px;
  color: #fff;
  background: linear-gradient(#3c80f0, #2560dc 15%, #245edb 80%, #1b48b0);
}
.start {
  gap: 4px;
  width: 96px;
  padding-right: 10px;
  border-radius: 0 8px 8px 0;
  background: linear-gradient(#5fb45a, #3a9438 25%, #369636 75%, #22702a);
  box-shadow: inset -3px 0 4px #22682a;
  font-size: 18px;
  line-height: 24px;
  font-style: italic;
  text-shadow: 1px 1px 1px #174a19;
}
.start svg { width: 20px; height: 20px; }
.quick { display: flex; flex: none; align-items: center; width: 102px; padding-left: 12px; gap: 6px; }
.quick svg { width: 17px; height: 17px; }
.quick .chev { margin: 0 0 8px 6px; }
.quick .chev svg { width: 9px; height: 7px; }
.task {
  flex: 0 1 156px;
  min-width: 0;
  justify-content: flex-start;
  gap: 4px;
  height: 26px;
  margin: 2px 2px 0 0;
  padding: 0 4px 0 9px;
  border-radius: 3px;
  background: linear-gradient(#5a98f8, #3c7cf0 20%, #3a78ec 85%, #2c60d0);
  overflow: hidden;
}
.task svg { width: 16px; height: 16px; }
.task .tri { width: 6px; height: 4px; margin-left: auto; }
.task.hidden { padding: 0; }
.task.hidden svg { width: 146px; height: 22px; }
.task.current { background: #1e4eb4; box-shadow: inset 1px 1px 2px #12307c; }
.lang { display: flex; flex: none; align-items: center; gap: 5px; margin-left: auto; padding-right: 6px; }
.lang svg { width: 17px; height: 20px; }
.tray {
  display: flex;
  flex: none;
  align-items: center;
  gap: 3px;
  width: 113px;
  border-left: 1px solid #0c3f9c;
  background: linear-gradient(#3cb0f8, #1a92ec 15%, #169aee 80%, #0f6fc4);
}
.tray svg { width: 16px; height: 16px; }
.tray .hide { margin-left: -10px; }
.tray .hide svg { width: 19px; height: 19px; }
.tray time { margin-left: 3px; font: 12px/16px "Liberation Sans", sans-serif; }
```
